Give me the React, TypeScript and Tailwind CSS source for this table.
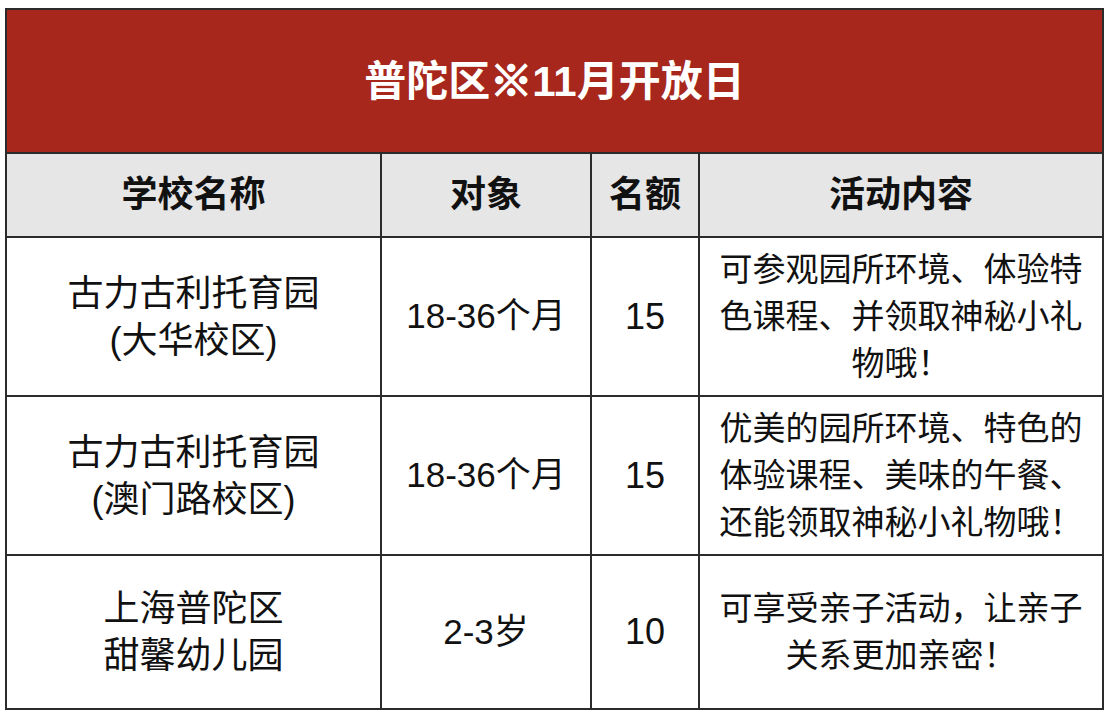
const rows = [
  {
    name: ['古力古利托育园', '(大华校区)'],
    target: '18-36个月',
    quota: '15',
    content: ['可参观园所环境、体验特', '色课程、并领取神秘小礼', '物哦！'],
    h: 'h-[159px]',
  },
  {
    name: ['古力古利托育园', '(澳门路校区)'],
    target: '18-36个月',
    quota: '15',
    content: ['优美的园所环境、特色的', '体验课程、美味的午餐、', '还能领取神秘小礼物哦！'],
    h: 'h-[159px]',
  },
  {
    name: ['上海普陀区', '甜馨幼儿园'],
    target: '2-3岁',
    quota: '10',
    content: ['可享受亲子活动，让亲子', '关系更加亲密！'],
    h: 'h-[154px]',
  },
];

const cell = 'border-2 border-[#2b2b2b] text-center align-middle';

export default function App() {
  return (
    <div
      className="w-[1111px] h-[719px] bg-white pt-[8px] pl-[5px] text-[#111]"
      style={{ fontFamily: '"Liberation Sans", "Noto Sans CJK SC", sans-serif' }}
    >
      <table className="table-fixed border-collapse w-[1097px]">
        <colgroup>
          <col className="w-[375px]" />
          <col className="w-[210px]" />
          <col className="w-[108px]" />
          <col className="w-[404px]" />
        </colgroup>
        <thead>
          <tr>
            <th colSpan={4} className={`${cell} h-[144px] bg-[#a7271c] text-white text-[42px] font-bold`}>
              普陀区<span className="[-webkit-text-stroke:2px_white]">※</span>11月开放日
            </th>
          </tr>
          <tr className="bg-[#e6e6e6]">
            {['学校名称', '对象', '名额', '活动内容'].map((t) => (
              <th key={t} className={`${cell} h-[84px] text-[36px] font-bold`}>
                {t}
              </th>
            ))}
          </tr>
        </thead>
        <tbody>
          {rows.map((r, i) => (
            <tr key={i}>
              <td className={`${cell} ${r.h} text-[36px] leading-[47px]`}>
                {r.name.map((l) => (
                  <div key={l}>{l}</div>
                ))}
              </td>
              <td className={`${cell} text-[35px]`}>{r.target}</td>
              <td className={`${cell} text-[36px]`}>{r.quota}</td>
              <td className={`${cell} text-[33px] leading-[47px] whitespace-nowrap`}>
                {r.content.map((l) => (
                  <div key={l}>{l}</div>
                ))}
              </td>
            </tr>
          ))}
        </tbody>
      </table>
    </div>
  );
}
